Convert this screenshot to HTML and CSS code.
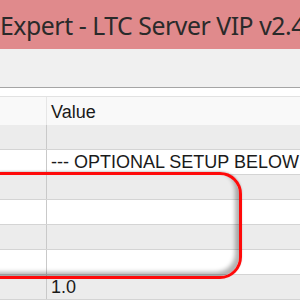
FILE: index.html
```html
<!DOCTYPE html>
<html>
<head>
<meta charset="utf-8">
<link rel="stylesheet" href="styles.css">
</head>
<body>
<div class="window">
  <div class="titlebar">Expert - LTC Server VIP v2.4</div>
  <div class="toolbar"></div>
  <div class="spacer"></div>
  <div class="grid">
    <div class="row header"><div class="name"></div><div class="value">Value</div></div>
    <div class="row odd"><div class="name"></div><div class="value"></div></div>
    <div class="row even"><div class="name"></div><div class="value">--- OPTIONAL SETUP BELOW</div></div>
    <div class="row odd"><div class="name"></div><div class="value"></div></div>
    <div class="row even"><div class="name"></div><div class="value"></div></div>
    <div class="row odd"><div class="name"></div><div class="value"></div></div>
    <div class="row even"><div class="name"></div><div class="value"></div></div>
    <div class="row odd"><div class="name"></div><div class="value">1.0</div></div>
    <div class="row even"><div class="name"></div><div class="value"></div></div>
  </div>
  <div class="highlight"></div>
</div>
</body>
</html>
```
FILE: styles.css
```css
html, body {
  margin: 0;
  padding: 0;
  background: #ffffff;
}
.window {
  position: relative;
  width: 300px;
  height: 300px;
  overflow: hidden;
}
.titlebar {
  height: 49px;
  background: #e08a8c;
  color: #2a2a2a;
  font-family: "Noto Sans", "Open Sans", sans-serif;
  font-size: 24.8px;
  letter-spacing: -0.45px;
  line-height: 50px;
  white-space: nowrap;
  padding-left: 0;
}
.toolbar {
  height: 38px;
  background: #f0f0f0;
  border-bottom: 1px solid #a5a5a5;
}
.spacer {
  height: 8px;
  background: #ffffff;
  border-bottom: 1px solid #e2e2e2;
}
.grid {
  display: flex;
  flex-direction: column;
  font-family: "Liberation Sans", Arial, sans-serif;
  font-size: 18px;
  color: #1a1a1a;
}
.row {
  display: grid;
  grid-template-columns: 47px 1fr;
  height: 24px;
  border-bottom: 1px solid #d4d4d4;
}
.row.header {
  height: 28px;
  background: #f9f9f9;
  border-bottom: none;
}
.row.odd { background: #ececec; }
.row.even { background: #ffffff; }
.name {
  border-right: 1px solid #c9c9c9;
}
.header .name { border-right-color: #e6e6e6; }
.value {
  padding-left: 4px;
  white-space: nowrap;
  line-height: 24px;
  overflow: hidden;
}
.header .value { line-height: 30px; }
.highlight {
  position: absolute;
  left: -20px;
  top: 172px;
  width: 256px;
  height: 101px;
  border: 3px solid #ff0a0a;
  border-radius: 22px;
  box-shadow: inset -4px -4px 4px rgba(0, 0, 0, 0.3), 0 -1px 2px rgba(0,0,0,0.2);
}
```
